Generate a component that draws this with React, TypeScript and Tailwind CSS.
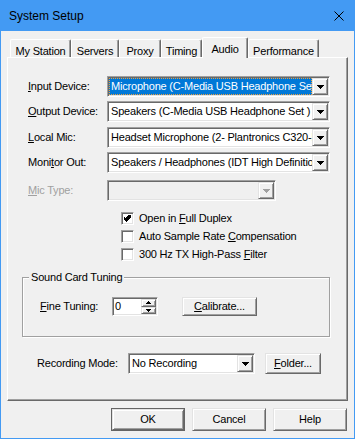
import React from 'react'

const raised =
  'border border-t-[#e3e3e3] border-l-[#e3e3e3] border-r-[#696969] border-b-[#696969] shadow-[inset_1px_1px_0_#ffffff,inset_-1px_-1px_0_#a0a0a0] bg-[#f0f0f0]'
const sunken =
  'border border-t-[#a0a0a0] border-l-[#a0a0a0] border-r-white border-b-white shadow-[inset_1px_1px_0_#696969,inset_-1px_-1px_0_#e3e3e3]'

function DownArrow({ color = '#000000' }: { color?: string }) {
  return (
    <svg width="7" height="4" viewBox="0 0 7 4" shapeRendering="crispEdges">
      <path d="M0 0h7v1h-1v1h-1v1h-1v1h-1v-1h-1v-1h-1v-1h-1z" fill={color} />
    </svg>
  )
}

function Combo({
  value,
  className,
  selected,
  disabled,
}: {
  value: string
  className: string
  selected?: boolean
  disabled?: boolean
}) {
  return (
    <div className={`${sunken} ${disabled ? 'bg-[#f0f0f0]' : 'bg-white'} ${className} flex h-[21px] p-[1px]`}>
      <div className="flex-1 min-w-0 overflow-hidden whitespace-nowrap">
        {selected ? (
          <div className="h-full bg-[#0078d7] text-white border border-dotted border-[#e8a040] pl-[1px] leading-[15px]">
            {value}
          </div>
        ) : (
          <div className="h-full pl-[2px] leading-[17px]">{value}</div>
        )}
      </div>
      <div className={`${raised} w-[16px] h-full flex items-center justify-center shrink-0`}>
        <DownArrow color={disabled ? '#a0a0a0' : '#000000'} />
      </div>
    </div>
  )
}

function Check({ checked, label }: { checked?: boolean; label: React.ReactNode }) {
  return (
    <div className="flex items-center h-[13px]">
      <div className={`${sunken} bg-white w-[13px] h-[13px] flex items-center justify-center`}>
        {checked && (
          <svg width="7" height="7" viewBox="0 0 7 7" shapeRendering="crispEdges">
            <path d="M6 0h1v3h-1v1h-1v1h-1v1h-1v1h-1v-1h-1v-1h-1v-1h-1v-3h1v1h1v1h1v-1h1v-1h1v-1h1z" fill="#000" />
          </svg>
        )}
      </div>
      <span className="ml-[5px] leading-[13px]">{label}</span>
    </div>
  )
}

function Button({ children, className, isDefault }: { children: React.ReactNode; className: string; isDefault?: boolean }) {
  if (isDefault) {
    return (
      <div className={`${className} border border-[#646464] flex`}>
        <div className={`${raised} flex-1 flex items-center justify-center`}>{children}</div>
      </div>
    )
  }
  return <div className={`${raised} ${className} flex items-center justify-center`}>{children}</div>
}

function Row({ label, children, top }: { label: React.ReactNode; children: React.ReactNode; top: string }) {
  return (
    <div className={`flex items-center h-[21px] pl-[20px] ${top}`}>
      <span className="w-[79px] shrink-0">{label}</span>
      {children}
    </div>
  )
}

export default function App() {
  const tabs = [
    { name: 'My Station', w: 'w-[61px]' },
    { name: 'Servers', w: 'w-[48px]' },
    { name: 'Proxy', w: 'w-[42px]' },
    { name: 'Timing', w: 'w-[41px]' },
    { name: 'Audio', w: 'w-[46px]', active: true },
    { name: 'Performance', w: 'w-[71px]' },
  ]

  return (
    <div className="w-[355px] h-[439px] bg-[#f0f0f0] border-x border-b border-[#439af3] flex flex-col text-[11px] tracking-[-0.2px] text-black font-['Liberation_Sans',Arial,sans-serif]">
      <div className="h-[31px] shrink-0 bg-[#439af3] flex items-center justify-between pl-[8px] pr-[10px]">
        <span className="text-[12px] tracking-normal">System Setup</span>
        <svg width="10" height="10" viewBox="0 0 10 10">
          <path d="M0.5 0.5L9.5 9.5M9.5 0.5L0.5 9.5" stroke="#000" strokeWidth="1" />
        </svg>
      </div>

      <div className="px-[6px] pt-[6px] flex flex-col">
        <div className="flex items-end h-[20px] pl-[3px]">
          {tabs.map((t) =>
            t.active ? (
              <div
                key={t.name}
                className={`${t.w} h-[21px] -mb-[1px] relative z-10 bg-[#f0f0f0] border-l border-t border-white border-r border-r-[#696969] shadow-[inset_-1px_0_0_#a0a0a0] rounded-t-[2px] flex justify-center pt-[3px]`}
              >
                {t.name}
              </div>
            ) : (
              <div
                key={t.name}
                className={`${t.w} h-[18px] bg-[#f0f0f0] border-l border-t border-white border-r border-r-[#696969] shadow-[inset_-1px_0_0_#a0a0a0] rounded-t-[2px] flex justify-center pt-[3px]`}
              >
                {t.name}
              </div>
            ),
          )}
        </div>

        <div className="h-[344px] border-l border-t border-white border-r border-b border-r-[#696969] border-b-[#696969] shadow-[inset_-1px_-1px_0_#a0a0a0] flex flex-col">
          <Row label={<><u>I</u>nput Device:</>} top="mt-[18px]">
            <Combo value="Microphone (C-Media USB Headphone Set )" className="w-[223px]" selected />
          </Row>
          <Row label={<><u>O</u>utput Device:</>} top="mt-[4px]">
            <Combo value="Speakers (C-Media USB Headphone Set )" className="w-[223px]" />
          </Row>
          <Row label={<><u>L</u>ocal Mic:</>} top="mt-[5px]">
            <Combo value="Headset Microphone (2- Plantronics C320-M)" className="w-[223px]" />
          </Row>
          <Row label={<>Moni<u>t</u>or Out:</>} top="mt-[4px]">
            <Combo value="Speakers / Headphones (IDT High Definition Audio)" className="w-[223px]" />
          </Row>
          <Row label={<span className="text-[#a0a0a0]"><u>M</u>ic Type:</span>} top="mt-[7px]">
            <Combo value="" className="w-[169px]" disabled />
          </Row>

          <div className="flex flex-col gap-[5px] pl-[113px] mt-[11px]">
            <Check checked label={<>Open in <u>F</u>ull Duplex</>} />
            <Check label={<>Auto Sample Rate <u>C</u>ompensation</>} />
            <Check label={<>300 Hz TX High-Pass <u>F</u>ilter</>} />
          </div>

          <fieldset className="ml-[14px] mt-[10px] w-[308px] h-[66px] border border-[#a0a0a0] shadow-[inset_1px_1px_0_#ffffff,1px_1px_0_#ffffff] p-0">
            <legend className="ml-[6px] px-[2px] leading-[13px] bg-[#f0f0f0]">Sound Card Tuning</legend>
            <div className="flex items-center pl-[17px] mt-[13px]">
              <span className="w-[72px] shrink-0"><u>F</u>ine Tuning:</span>
              <div className={`${sunken} bg-white w-[46px] h-[19px] flex p-[1px]`}>
                <div className="flex-1 pl-[1px] leading-[15px]">0</div>
                <div className="w-[15px] flex flex-col">
                  <div className={`${raised} flex-1 flex items-center justify-center`}>
                    <svg width="5" height="3" viewBox="0 0 5 3" shapeRendering="crispEdges">
                      <path d="M2 0h1v1h1v1h1v1h-5v-1h1v-1h1z" fill="#000" />
                    </svg>
                  </div>
                  <div className={`${raised} flex-1 flex items-center justify-center`}>
                    <svg width="5" height="3" viewBox="0 0 5 3" shapeRendering="crispEdges">
                      <path d="M0 0h5v1h-1v1h-1v1h-1v-1h-1v-1h-1z" fill="#000" />
                    </svg>
                  </div>
                </div>
              </div>
              <Button className="ml-[24px] w-[75px] h-[19px]">
                <span><u>C</u>alibrate...</span>
              </Button>
            </div>
          </fieldset>

          <div className="flex items-center h-[21px] pl-[29px] mt-[16px]">
            <span className="w-[91px] shrink-0">Recording Mode:</span>
            <Combo value="No Recording" className="w-[127px]" />
            <Button className="ml-[10px] w-[56px] h-[21px]">
              <span><u>F</u>older...</span>
            </Button>
          </div>
        </div>

        <div className="flex justify-end gap-[7px] mt-[7px] pr-[1px]">
          <Button className="w-[74px] h-[23px]" isDefault>
            OK
          </Button>
          <Button className="w-[74px] h-[23px]">Cancel</Button>
          <Button className="w-[74px] h-[23px]">Help</Button>
        </div>
      </div>
    </div>
  )
}
